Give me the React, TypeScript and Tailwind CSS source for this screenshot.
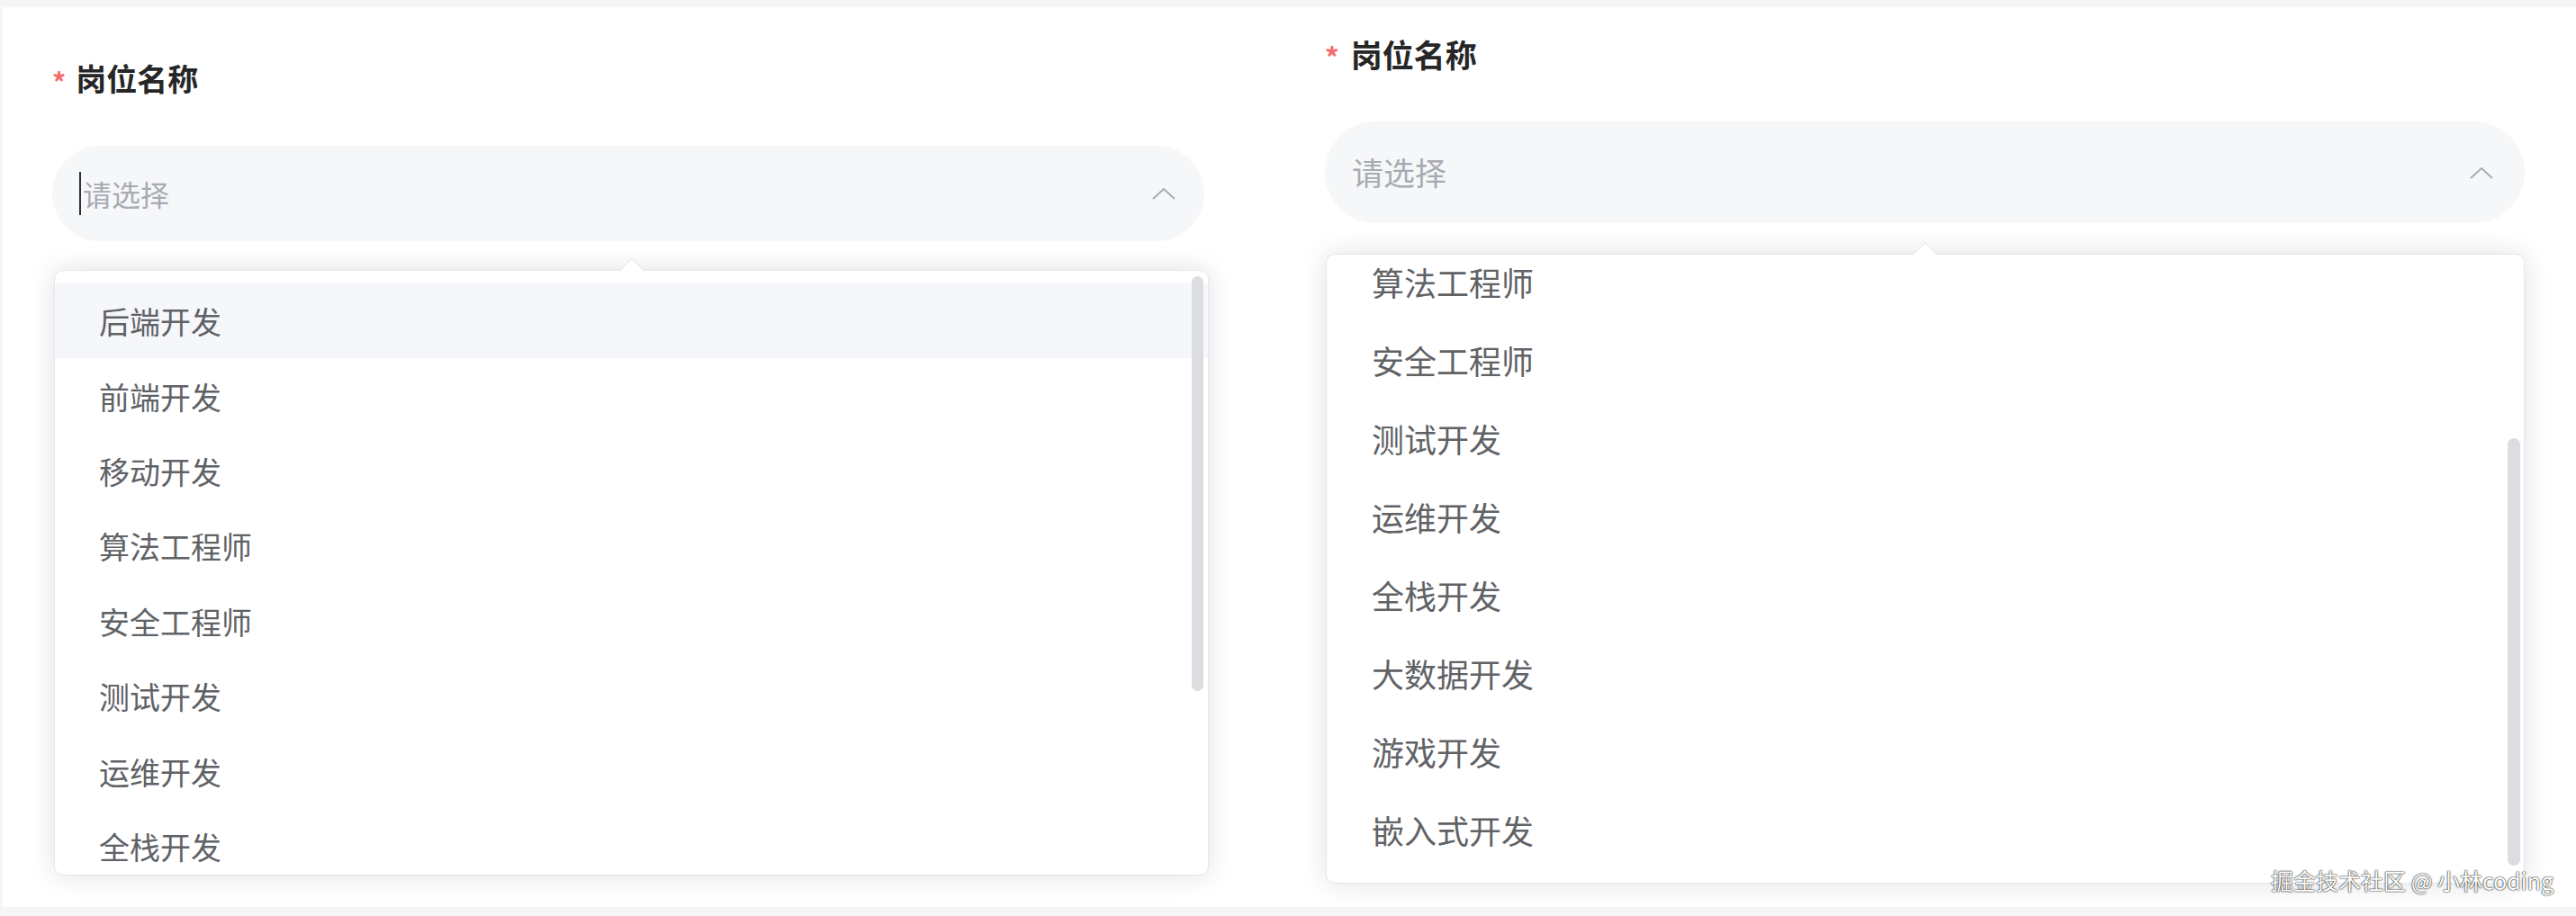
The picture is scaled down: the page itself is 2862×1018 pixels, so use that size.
const jobs = [
  "后端开发",
  "前端开发",
  "移动开发",
  "算法工程师",
  "安全工程师",
  "测试开发",
  "运维开发",
  "全栈开发",
  "大数据开发",
  "游戏开发",
  "嵌入式开发",
];

function Chevron() {
  return (
    <svg width="26" height="14" viewBox="0 0 26 14" fill="none">
      <polyline points="1,13 13,2 25,13" stroke="#a8abb2" strokeWidth="2" />
    </svg>
  );
}

function Arrow() {
  return (
    <div className="absolute left-1/2 top-[-10px] -translate-x-1/2 w-[20px] h-[20px] rotate-45 bg-white border-l border-t border-[#e4e7ed] z-10" />
  );
}

export default function App() {
  return (
    <div
      className="w-[2862px] h-[1018px] bg-[#f5f5f5] pt-[8px] pb-[10px] pl-[3px] relative"
      style={{ fontFamily: '"Noto Sans CJK SC", "Noto Sans", sans-serif' }}
    >
      <div className="flex h-full bg-white">
        {/* left: list at top */}
        <div className="w-[1469px] pl-[55px] flex flex-col">
          <div className="mt-[59px] h-[40px] flex items-center text-[34px] leading-[40px] font-bold text-[#262626]">
            <span className="text-[#f56c6c] text-[30px] mr-[11px] pt-[6px]">*</span>
            岗位名称
          </div>
          <div className="mt-[55px] w-[1280px] h-[106px] rounded-full bg-[#f6f7f9] flex items-center pl-[30px] pr-[32px]">
            <span className="w-[2px] h-[48px] bg-[#303133] mr-[2px]" />
            <span className="flex-1 text-[32px] text-[#a8abb2]">请选择</span>
            <Chevron />
          </div>
          <div className="relative mt-[32px] ml-[2px] w-[1283px] h-[673px] bg-white border border-[#e4e7ed] rounded-[10px] shadow-[0_0_30px_rgba(0,0,0,0.12)]">
            <Arrow />
            <div className="h-full overflow-hidden rounded-[10px] pt-[14px]">
              {jobs.map((j, i) => (
                <div
                  key={j}
                  className={`h-[83.4px] flex items-center pl-[49px] text-[34px] text-[#606266] ${
                    i === 0 ? "bg-[#f5f7fa]" : ""
                  }`}
                >
                  {j}
                </div>
              ))}
            </div>
            <div className="absolute right-[5px] top-[6px] w-[13px] h-[461px] rounded-full bg-[#dcdde0]" />
          </div>
        </div>

        {/* right: list scrolled to bottom */}
        <div className="flex-1 flex flex-col">
          <div className="mt-[30px] h-[44px] flex items-center text-[35px] leading-[44px] font-bold text-[#262626]">
            <span className="text-[#f56c6c] text-[31px] mr-[13px] pt-[6px]">*</span>
            岗位名称
          </div>
          <div className="mt-[53px] w-[1333px] h-[113px] rounded-full bg-[#f6f7f9] flex items-center pl-[30px] pr-[35px]">
            <span className="flex-1 text-[35px] text-[#a8abb2]">请选择</span>
            <Chevron />
          </div>
          <div className="relative mt-[34px] ml-[1px] w-[1332px] h-[700px] bg-white border border-[#e4e7ed] rounded-[10px] shadow-[0_0_30px_rgba(0,0,0,0.12)]">
            <Arrow />
            <div className="h-full overflow-hidden rounded-[10px]">
              <div className="-mt-[275px] pb-[16px]">
                {jobs.map((j) => (
                  <div key={j} className="h-[87px] flex items-center pl-[50px] text-[36px] text-[#606266]">
                    {j}
                  </div>
                ))}
              </div>
            </div>
            <div className="absolute right-[4px] top-[204px] w-[14px] h-[475px] rounded-full bg-[#dcdde0]" />
          </div>
        </div>
      </div>

      <div className="absolute right-[25px] top-[960px] text-[25px] text-white [text-shadow:0_0_2px_rgba(0,0,0,0.9),0_0_1px_rgba(0,0,0,0.9)]">
        掘金技术社区 @ 小林coding
      </div>
    </div>
  );
}
